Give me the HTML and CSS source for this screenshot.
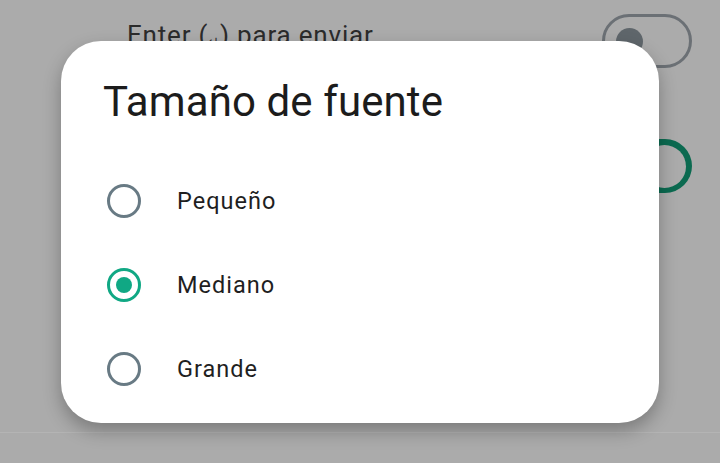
FILE: index.html
```html
<!DOCTYPE html>
<html lang="es">
<head>
<meta charset="utf-8">
<title>Tamaño de fuente</title>
<link rel="stylesheet" href="styles.css">
</head>
<body>
<div class="page">
  <div class="settings">
    <div class="row">
      <span class="row-label">Enter (<span class="enter-glyph">↵</span>) para enviar</span>
      <span class="toggle off"><span class="thumb"></span></span>
    </div>
    <div class="row">
      <span class="row-label"></span>
      <span class="toggle on"><span class="thumb"></span></span>
    </div>
    <div class="divider"></div>
  </div>

  <div class="dialog" role="dialog">
    <h1 class="dialog-title">Tamaño de fuente</h1>
    <div class="options">
      <div class="option">
        <span class="radio"></span>
        <span class="option-label">Pequeño</span>
      </div>
      <div class="option">
        <span class="radio checked"></span>
        <span class="option-label">Mediano</span>
      </div>
      <div class="option">
        <span class="radio"></span>
        <span class="option-label">Grande</span>
      </div>
    </div>
  </div>
</div>
</body>
</html>
```

FILE: styles.css
```css
html, body {
  margin: 0;
  padding: 0;
}
body {
  width: 720px;
  height: 463px;
  overflow: hidden;
  background: #ababab;
  font-family: Roboto, "Noto Sans", sans-serif;
}
.page {
  position: relative;
  width: 720px;
  height: 463px;
}
.settings {
  display: flex;
  flex-direction: column;
  padding-top: 14px;
}
.row {
  height: 54px;
  display: flex;
  align-items: center;
  justify-content: space-between;
  padding: 0 28px 0 127px;
}
.row + .row {
  margin-top: 71px;
}
.row-label {
  font-size: 26px;
  letter-spacing: 0.8px;
  color: #2b2b2b;
  position: relative;
  top: -6px;
}
.enter-glyph {
  font-size: 13px;
  vertical-align: -2px;
}
.toggle {
  box-sizing: border-box;
  width: 90px;
  height: 54px;
  border-radius: 27px;
  display: flex;
  align-items: center;
}
.toggle.off {
  border: 3px solid #6b7075;
  padding-left: 11px;
}
.toggle.off .thumb {
  width: 27px;
  height: 27px;
  border-radius: 50%;
  background: #5f666b;
}
.toggle.on {
  background: #0b6a50;
  justify-content: flex-end;
  padding-right: 6px;
}
.toggle.on .thumb {
  width: 43px;
  height: 43px;
  border-radius: 50%;
  background: #ababab;
}
.divider {
  margin-top: 239px;
  height: 1px;
  background: #b4b4b4;
}
.dialog {
  position: absolute;
  left: 61px;
  top: 41px;
  width: 598px;
  height: 382px;
  box-sizing: border-box;
  background: #ffffff;
  border-radius: 40px;
  box-shadow: 0 8px 18px rgba(0, 0, 0, 0.28);
  padding: 36px 0 0 42px;
}
.dialog-title {
  margin: 0;
  font-size: 42px;
  font-weight: 400;
  letter-spacing: 0.1px;
  line-height: 50px;
  color: #1c1c1c;
}
.options {
  display: flex;
  flex-direction: column;
  margin-top: 32px;
}
.option {
  height: 84px;
  display: flex;
  align-items: center;
}
.radio {
  box-sizing: border-box;
  width: 34px;
  height: 34px;
  border-radius: 50%;
  border: 3px solid #687a84;
  margin-left: 4px;
  display: flex;
  align-items: center;
  justify-content: center;
}
.radio.checked {
  border-color: #10a884;
}
.radio.checked::after {
  content: "";
  width: 16px;
  height: 16px;
  border-radius: 50%;
  background: #10a884;
}
.option-label {
  margin-left: 36px;
  font-size: 23.5px;
  letter-spacing: 1px;
  color: #1f1f1f;
}
```
